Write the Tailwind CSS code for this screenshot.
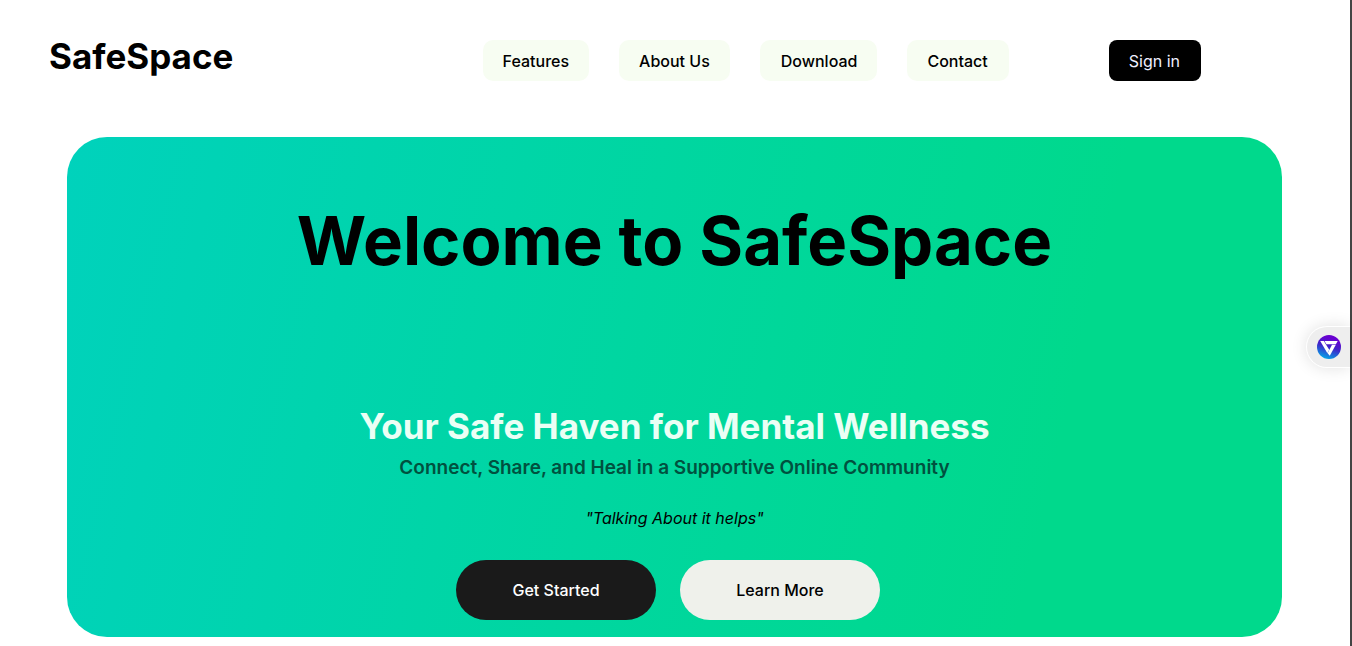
<!DOCTYPE html>
<html lang="en">
<head>
<meta charset="utf-8">
<title>SafeSpace</title>
<script src="https://cdn.jsdelivr.net/npm/@tailwindcss/browser@4"></script>
</head>
<body class="min-h-screen overflow-hidden border-r-2 border-[#444444] bg-white font-['Inter',sans-serif] text-black">
<header class="flex items-start pl-[49px] pr-[149px] pt-10">
  <a href="#" class="-mt-1 text-[35px] leading-10 font-bold">SafeSpace</a>
  <nav class="ml-auto mr-[100px] flex gap-[30px] font-medium">
    <a href="#" class="rounded-[10px] bg-[#f7fdf2] px-5 pt-[9px] pb-2 leading-6">Features</a>
    <a href="#" class="rounded-[10px] bg-[#f7fdf2] px-5 pt-[9px] pb-2 leading-6">About Us</a>
    <a href="#" class="rounded-[10px] bg-[#f7fdf2] pl-[21px] pr-5 pt-[9px] pb-2 leading-6">Download</a>
    <a href="#" class="rounded-[10px] bg-[#f7fdf2] pl-5 pr-[21px] pt-[9px] pb-2 leading-6">Contact</a>
  </nav>
  <button class="rounded-lg bg-black pl-5 pr-[21px] pt-[9px] pb-2 leading-6 text-[#f0f0ff]">Sign in</button>
</header>
<main class="ml-[67px] mr-[68px] mt-14 flex h-[500px] flex-col items-center rounded-[40px] bg-linear-[103deg,#00d2bc_0%,#00d98c_80%] pt-16 text-center">
  <h1 class="text-[67px] font-bold leading-20">Welcome to SafeSpace</h1>
  <h2 class="mt-[123px] text-[35px] font-bold leading-11 text-[#ebfff5]">Your Safe Haven for Mental Wellness</h2>
  <h3 class="mt-2 text-[19px] font-semibold leading-6 text-[#00513f]">Connect, Share, and Heal in a Supportive Online Community</h3>
  <p class="mt-[26px] italic">"Talking About it helps"</p>
  <div class="mr-[13px] mt-[30px] flex gap-6 font-medium">
    <button class="h-15 w-50 rounded-full bg-[#1a1a1a] text-white">Get Started</button>
    <button class="h-15 w-50 rounded-full bg-[#eff1eb]">Learn More</button>
  </div>
</main>
<button aria-label="Open assistant" class="fixed right-0.5 top-[326px] flex h-[42px] w-11 items-center rounded-l-full border border-r-0 border-white bg-[#eeeeee] pl-2.5 shadow-[0_0_16px_rgba(0,0,0,0.12)]">
  <svg class="size-6" viewBox="0 0 24 24" fill="none">
    <defs><linearGradient id="badge" x1="16" y1="0" x2="8" y2="24" gradientUnits="userSpaceOnUse"><stop offset="0.15" stop-color="#6800d0"/><stop offset="0.5" stop-color="#4024c8"/><stop offset="1" stop-color="#00a8e8"/></linearGradient></defs>
    <circle cx="12" cy="12" r="12" fill="url(#badge)"/>
    <path d="M3.2 6h3.6l5.4 8.8-1.8 3.4z" fill="white"/>
    <path d="M7.5 6h13.2l-1.8 3.2H9.4z" fill="white"/>
    <path d="M18.8 9.8l-6 11-2.2-2.6 4.4-8.4z" fill="white"/>
  </svg>
</button>
</body>
</html>
